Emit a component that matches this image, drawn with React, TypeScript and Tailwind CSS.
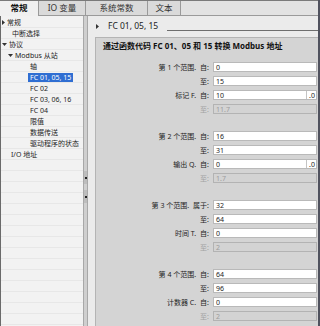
import React from 'react'

type TreeItem = { label: string; pad: string; caret?: 'right' | 'down'; caretPad?: string; selected?: boolean }

const tree: TreeItem[] = [
  { label: '常规', pad: 'pl-[1px]', caret: 'right' },
  { label: '中断选择', pad: 'pl-[11px]' },
  { label: '协议', pad: 'pl-[1px]', caret: 'down' },
  { label: 'Modbus 从站', pad: 'pl-[7px]', caret: 'down' },
  { label: '轴', pad: 'pl-[29px]' },
  { label: 'FC 01, 05, 15', pad: 'pl-[27px]', selected: true },
  { label: 'FC 02', pad: 'pl-[29px]' },
  { label: 'FC 03, 06, 16', pad: 'pl-[29px]' },
  { label: 'FC 04', pad: 'pl-[29px]' },
  { label: '限值', pad: 'pl-[29px]' },
  { label: '数据传送', pad: 'pl-[29px]' },
  { label: '驱动程序的状态', pad: 'pl-[29px]' },
  { label: 'I/O 地址', pad: 'pl-[10px]' },
]

const groups = [
  { name: '第 1 个范围.', rel: '自:', from: '0', to: '15', area: '标记 F.', areaFrom: '10', frac: '.0', areaTo: '11.7' },
  { name: '第 2 个范围.', rel: '自:', from: '16', to: '31', area: '输出 Q.', areaFrom: '0', frac: '.0', areaTo: '1.7' },
  { name: '第 3 个范围.', rel: '属于:', from: '32', to: '64', area: '时间 T.', areaFrom: '0', frac: '', areaTo: '2' },
  { name: '第 4 个范围.', rel: '自:', from: '64', to: '96', area: '计数器 C.', areaFrom: '0', frac: '', areaTo: '2' },
]

const CaretRight = () => (
  <svg width="3" height="5" viewBox="0 0 3 5" className="shrink-0">
    <path d="M0 0 L3 2.5 L0 5 Z" fill="#333" />
  </svg>
)

const CaretDown = () => (
  <svg width="5" height="3" viewBox="0 0 5 3" className="shrink-0">
    <path d="M0 0 L5 0 L2.5 3 Z" fill="#333" />
  </svg>
)

const Field = ({ label, value, disabled, frac }: { label: React.ReactNode; value: string; disabled?: boolean; frac?: string }) => (
  <div className="flex items-center h-[14px]">
    <div className={`w-[113px] text-right leading-none ${disabled ? 'text-[#a2a2a2]' : 'text-[#1e1e1e]'}`}>{label}</div>
    <div
      className={`ml-[4px] mr-[1px] flex-1 h-[10px] flex items-stretch border ${
        disabled ? 'bg-[#d3d3d3] border-[#b3b3b3] text-[#9c9c9c]' : 'bg-white border-[#b9b9b9] text-[#1e1e1e]'
      }`}
    >
      <div className="flex-1 pl-[2px] flex items-center leading-none">{value}</div>
      {frac && <div className="w-[10px] border-l border-[#c4c4c4] flex items-center justify-end pr-[1px] leading-none">{frac}</div>}
    </div>
  </div>
)

export default function App() {
  return (
    <div className="w-[320px] h-[326px] overflow-hidden flex flex-col bg-[#e8e8e8] border-r-[2px] border-[#50525e] font-['Noto_Sans','Noto_Sans_CJK_SC',sans-serif] text-[7px]">
      {/* tabs */}
      <div className="h-[16px] flex items-stretch bg-[#dadada] border-b border-[#9a9a9a] border-t border-t-[#7a7a7a]">
        <div className="w-[39px] bg-[#f0f0f0] border-r border-[#9a9a9a] flex items-center justify-center font-bold text-[8.5px] text-[#111] -mb-[1px]">常规</div>
        <div className="w-[47px] border-r border-[#9a9a9a] flex items-center justify-center text-[8.5px] text-[#333]">IO 变量</div>
        <div className="w-[62px] border-r border-[#9a9a9a] flex items-center justify-center text-[8.5px] text-[#333]">系统常数</div>
        <div className="w-[33px] border-r border-[#9a9a9a] flex items-center justify-center text-[8.5px] text-[#333]">文本</div>
        <div className="flex-1 bg-[#e2e2e2]" />
      </div>

      <div className="flex-1 flex min-h-0">
        {/* navigation tree */}
        <div className="w-[83px] bg-[#f2f2f2] border-l border-[#6a6a6a] pt-[1px] overflow-hidden">
          {Array.from({ length: 28 }).map((_, i) => {
            const it = tree[i]
            return (
              <div key={i} className={`h-[11px] flex items-center border-b border-[#e7e7e7] text-[#1e1e1e] ${it ? it.pad : ''}`}>
                {it && (
                  <>
                    {it.caret === 'right' && <span className="mr-[2px]"><CaretRight /></span>}
                    {it.caret === 'down' && <span className="mr-[2px]"><CaretDown /></span>}
                    <span className={`leading-none whitespace-nowrap ${it.selected ? 'bg-[#2f6ed2] text-white px-[2px] py-[1px]' : ''}`}>{it.label}</span>
                  </>
                )}
              </div>
            )
          })}
        </div>

        {/* splitter */}
        <div className="w-[5px] bg-[#cfcfcf] border-l border-r border-[#a8a8a8] flex flex-col items-center pt-[155px] gap-[6px]">
          <div className="w-[3px] h-[13px] bg-[#bdbdbd] flex items-center justify-center">
            <div className="w-[2px] h-[2px] bg-[#222]" />
          </div>
          <div className="w-[3px] h-[13px] bg-[#bdbdbd] flex items-center justify-center">
            <div className="w-[2px] h-[2px] bg-[#222]" />
          </div>
        </div>

        {/* editor */}
        <div className="flex-1 flex flex-col bg-[#ebebeb]">
          <div className="h-[21px] flex items-center pl-[8px] gap-[9px]">
            <CaretRight />
            <span className="text-[8.5px] text-[#222] leading-none">FC 01, 05, 15</span>
            <div className="flex-1 h-px bg-[#6e6e6e] mt-[8px]" />
          </div>
          <div className="flex-1 ml-[7px] bg-[#d4d4d4] border-l border-t border-[#b4b4b4]">
            <div className="pl-[7px] pt-[3px] h-[22px] font-bold text-[8px] text-[#111] leading-[10px]">
              通过函数代码 FC 01、05 和 15 转换 Modbus 地址
            </div>
            <div className="flex flex-col gap-[13px]">
              {groups.map((g) => (
                <div key={g.name}>
                  <Field label={<>{g.name}<span className="ml-[4px]">{g.rel}</span></>} value={g.from} />
                  <Field label="至:" value={g.to} />
                  <Field label={<>{g.area}<span className="ml-[4px]">自:</span></>} value={g.areaFrom} frac={g.frac || undefined} />
                  <Field label="至:" value={g.areaTo} disabled />
                </div>
              ))}
            </div>
          </div>
        </div>
      </div>
    </div>
  )
}
